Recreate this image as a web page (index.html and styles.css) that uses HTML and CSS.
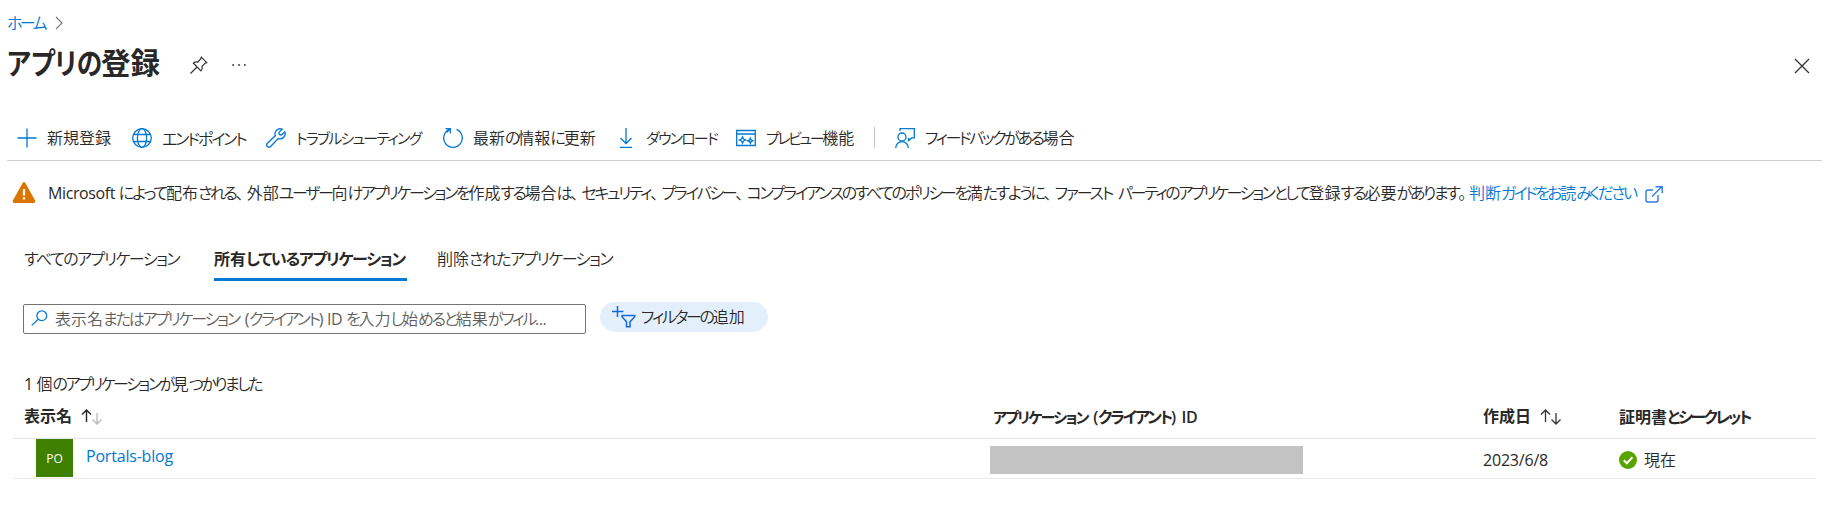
FILE: index.html
```html
<!DOCTYPE html>
<html lang="ja">
<head>
<meta charset="utf-8">
<title>アプリの登録</title>
<link rel="stylesheet" href="styles.css">
</head>
<body>
<nav class="crumbs"><a class="link"><span class="k">ホーム</span></a>
<svg width="8" height="14" viewBox="0 0 8 14"><path d="M1 1l6 6-6 6" fill="none" stroke="#777" stroke-width="1.1"/></svg></nav>
<header class="title-row">
<h1><span class="k">アプリの</span>登録</h1>
<svg class="pin" width="18" height="18" viewBox="0 0 18 18" fill="none" stroke="#333" stroke-width="1.2"><path d="M11.3 1.2L16.8 6.7 15 7.3 12 10.4c.5 1.7.1 3.3-1 4.4L3.400 7.200c1.200-1.100 2.800-1.500 4.300-1L10.700 3zM7 11L.5 17.500"/></svg>
<svg class="dots" width="14" height="4" viewBox="0 0 14 4" fill="#444"><circle cx="1.200" cy="2" r="1"/><circle cx="7" cy="2" r="1"/><circle cx="12.800" cy="2" r="1"/></svg>
<svg class="close" width="16" height="16" viewBox="0 0 16 16"><path d="M1 1l14 14M15 1L1 15" stroke="#333" stroke-width="1.300"/></svg>
</header>
<div class="toolbar">
<div class="tool"><svg viewBox="0 0 20 20"><path d="M.500 10h19M10 .500v19"/></svg><span>新規登録</span></div>
<div class="tool"><svg viewBox="0 0 20 20"><circle cx="10" cy="10" r="9.300"/><ellipse cx="10" cy="10" rx="4.600" ry="9.300"/><path d="M1.500 6.500h17M1.500 13.500h17"/></svg><span class="k">エンドポイント</span></div>
<div class="tool"><svg viewBox="0 0 20 20"><path d="M16.200 1.200A5.200 5.200 0 0 0 9.300 7.800L1.400 15.300a2.150 2.150 0 0 0 3.200 3.200L12.300 10.600A5.200 5.200 0 0 0 18.800 3.800L15.500 7 13.200 6.500 12.900 4.400z"/></svg><span class="k small">トラブルシューティング</span></div>
<div class="tool"><svg viewBox="0 0 20 20"><path d="M13.500 1.400A9.300 9.300 0 1 1 6.500 1.400M2.500 .700h4.800v4.800M7.300 .700L3.800 4.200"/></svg><span>最新<span class="k">の</span>情報<span class="k">に</span>更新</span></div>
<div class="tool"><svg viewBox="0 0 20 20"><path d="M10 0v15.500M4.500 10l5.500 5.500 5.500-5.500M4 19.300h12"/></svg><span class="k small">ダウンロード</span></div>
<div class="tool"><svg viewBox="0 0 20 20"><path d="M.700 2.500h18.600v15H.700zM.700 6h18.600M6.500 8.800l1 2.200 2.200 1-2.200 1-1 2.200-1-2.200-2.200-1 2.200-1zM14.300 10.200l.8 1.800 1.800.8-1.800.8-.8 1.800-.8-1.800-1.800-.8 1.800-.8z"/></svg><span><span class="k small tight">プレビュー</span>機能</span></div>
<div class="sep"></div>
<div class="tool"><svg viewBox="0 0 20 20"><circle cx="7" cy="9" r="4"/><path d="M.700 20a6.300 6.300 0 0 1 12.600 0M5 3V.700h14.300v9.200h-2.600l-3.200 2.700V9.900"/></svg><span><span class="k tight">フィードバックがある</span>場合</span></div>
</div>
<div class="notice">
<svg width="24" height="21" viewBox="0 0 24 21"><path d="M10.500 1.200Q12-1 13.500 1.200L23 18.200Q24 21 21.500 21H2.500Q0 21 1 18.200z" fill="#db7500"/><path d="M12 7v6.500M12 15.200v2.200" stroke="#fff" stroke-width="2.200"/></svg>
<p><span class="en">Microsoft </span><span class="k loose">によって</span>配布<span class="k">される</span><span class="c">、</span>外部<span class="k">ユーザー</span>向<span class="k">けアプリケーションを</span>作成<span class="k">する</span>場合<span class="k">は</span><span class="c">、</span><span class="k">セキュリティ</span><span class="c">、</span><span class="k">プライバシー</span><span class="c">、</span><span class="k">コンプライアンスのすべてのポリシーを</span>満<span class="k">たすように</span><span class="c">、</span><span class="k loose">ファースト</span><span class="en gap"> </span><span class="k">パーティのアプリケーションとして</span>登録<span class="k">する</span>必要<span class="k">があります</span><span class="c">。</span></p>
<a class="link">判断<span class="k">ガイドをお</span>読<span class="k">みください</span></a>
<svg class="ext" width="18" height="17" viewBox="0 0 18 17" fill="none" stroke="#2f7be5" stroke-width="1.400"><path d="M8 4H3Q1 4 1 6v8q0 2 2 2h8q2 0 2-2V9M7 10.500L16.500 1M10.500.800h6.700V7"/></svg>
</div>
<div class="tabs">
<span class="tab a"><span class="k">すべてのアプリケーション</span></span>
<span class="tab b active">所有<span class="k">しているアプリケーション</span></span>
<span class="tab c3">削除<span class="k">されたアプリケーション</span></span>
</div>
<div class="filters">
<div class="search"><svg width="17" height="16" viewBox="0 0 17 16" fill="none" stroke="#0078d4" stroke-width="1.300"><circle cx="10.800" cy="5.700" r="4.900"/><path d="M7.300 9.200L.700 15.400"/></svg><span>表示名<span class="k">またはアプリケーション</span><span class="en gap"> (</span><span class="k">クライアント</span><span class="en">) ID </span><span class="k">を</span>入力<span class="k">し</span>始<span class="k">めると</span>結果<span class="k">がフィル</span><span class="en">...</span></span></div>
<div class="pill"><svg width="24" height="22" viewBox="0 0 24 22" fill="none" stroke="#1267dd" stroke-width="1.500"><path d="M0 5.500h11.500M5.500 0v11"/><path d="M10 9.500h12.700v1.300L18 15.800v5h-3.500v-5L10 10.800z"/></svg><span><span class="k">フィルターの</span>追加</span></div>
</div>
<p class="count"><span class="en">1 </span>個<span class="k">のアプリケーションが</span>見<span class="k">つかりました</span></p>
<div class="grid head">
<div class="name">表示名<svg width="22" height="18" viewBox="0 0 22 18" fill="none" stroke-width="1.400"><path stroke="#222" d="M5.500 14V2M1 6.500L5.500 2 10 6.500"/><path stroke="#bbb" d="M16 5v11M11.500 11.500L16 16l4.500-4.500"/></svg></div>
<div><span><span class="k small">アプリケーション</span><span class="en gap"> (</span><span class="k">クライアント</span><span class="en gap">) ID</span></span></div>
<div>作成日<svg width="22" height="18" viewBox="0 0 22 18" fill="none" stroke="#333" stroke-width="1.300"><path d="M5.500 14V2M1 6.500L5.500 2 10 6.500M16 5v11M11.500 11.500L16 16l4.500-4.500"/></svg></div>
<div><span>証明書<span class="k tight">とシークレット</span></span></div>
</div>
<div class="grid row">
<div class="app"><span class="avatar">PO</span><a class="link en">Portals-blog</a></div>
<div class="redacted"></div>
<div class="date">2023/6/8</div>
<div class="state"><svg width="18" height="18" viewBox="0 0 18 18"><circle cx="9" cy="9" r="9" fill="#57a300"/><path d="M4.800 9.200l3 3 5.600-6" fill="none" stroke="#fff" stroke-width="2"/></svg>現在</div>
</div>
</body>
</html>
```
FILE: styles.css
```css
* { box-sizing: border-box; }
body { margin: 0; background: #fff; color: #292827; width: 1833px; height: 511px; overflow: hidden; font: 16px/24px "Open Sans", "Noto Sans CJK JP", sans-serif; font-weight: 350; white-space: nowrap; }
h1, p { margin: 0; }
svg { flex: none; display: block; }
.k { font-family: "Noto Sans CJK JP", sans-serif; font-feature-settings: "palt"; letter-spacing: -2.1px; }
.k.small { font-size: 15px; letter-spacing: -1.8px; }
.k.tight { letter-spacing: -2.4px; }
.c { letter-spacing: -4.8px; }
.en { font-weight: 400; letter-spacing: -.4px; }
.gap { word-spacing: 2px; }
.link { color: #0078d4; }
.crumbs { display: flex; align-items: center; height: 33px; padding: 12px 0 0 7px; gap: 10px; }
.crumbs .k { letter-spacing: -2.6px; }
.title-row { display: flex; align-items: center; height: 58px; padding-left: 7px; }
h1 { width: 183px; font-size: 29.5px; line-height: 40px; font-weight: 700; }
h1 .k { display: inline-block; width: 94px; letter-spacing: 0; transform: scaleX(.87); transform-origin: left; }
.pin { margin-top: 6px; }
.dots { margin: 6px 0 0 24px; }
.close { margin: 7px 23px 0 auto; }
.toolbar { display: grid; grid-template-columns: 115px 134px 177px 173px 120px 138px 21px auto; align-items: center; height: 70px; margin: 0 11px 0 7px; padding: 24px 0 0 10px; border-bottom: 1px solid #d2d0ce; }
.tool { display: flex; align-items: center; gap: 10px; }
.tool svg { width: 20px; height: 20px; fill: none; stroke: #0078d4; stroke-width: 1.3; }
.sep { width: 1px; height: 21px; background: #c8c6c4; }
.notice { display: flex; align-items: center; height: 63px; padding-left: 12px; }
.notice p { width: 1420px; margin-left: 12px; }
.notice p + .link { margin-left: 1px; }
.notice p .k { letter-spacing: -2.35px; }
.notice p .k.loose { letter-spacing: -2.1px; }
.notice .link { width: 169px; }
.notice .link .k { letter-spacing: -2.6px; }
.ext { margin: 4px 0 0 7px; }
.tabs { display: flex; height: 57px; padding: 21px 0 0 24px; }
.tab { height: 36px; line-height: 26px; }
.tab.a { width: 190px; }
.tab.b { width: 193px; margin-right: 30px; }
.tab.a .k { letter-spacing: -1.5px; }
.tab.b .k { letter-spacing: -1.3px; }
.tab.c3 .k { letter-spacing: -1.5px; }
.active { font-weight: 700; border-bottom: 3px solid #0078d4; }
.filters { display: flex; gap: 14px; padding: 21px 0 0 23px; }
.search { display: flex; align-items: center; gap: 7px; width: 563px; height: 30px; margin-top: 2px; padding: 0 0 2px 7px; border: 1px solid #767472; border-radius: 2px; color: #605e5c; }
.search .k { letter-spacing: -2.2px; }
.pill { display: flex; align-items: center; gap: 5px; width: 168px; height: 30px; padding: 0 0 1px 12px; border-radius: 15px; background: #e3f0fb; }
.pill .k { letter-spacing: -2.3px; }
.count { height: 61px; padding: 37px 0 0 24px; }
.count .k { letter-spacing: -2.5px; }
.grid { display: grid; grid-template-columns: 980px 490px 136px auto; margin: 0 17px 0 13px; }
.head { height: 44px; padding-top: 9px; font-weight: 700; border-bottom: 1px solid #e5e5e5; }
.head > div { display: flex; gap: 9px; }
.head .name { padding-left: 11px; }
.head svg { margin-top: 4px; }
.head .en { font-weight: 600; }
.row { height: 40px; border-bottom: 1px solid #edebe9; }
.app { display: flex; padding-left: 23px; }
.avatar { width: 37px; height: 38px; margin-right: 13px; background: #3f8000; color: #fff; font-size: 12px; font-weight: 400; line-height: 39px; text-align: center; }
.app .link { line-height: 35px; letter-spacing: -.2px; }
.redacted { width: 313px; height: 28px; margin: 7px 0 0 -3px; background: #c3c3c3; }
.date, .state { line-height: 42px; }
.date { font-weight: 400; letter-spacing: -.2px; }
.state { display: flex; gap: 7px; }
.state svg { margin-top: 12px; }
```
